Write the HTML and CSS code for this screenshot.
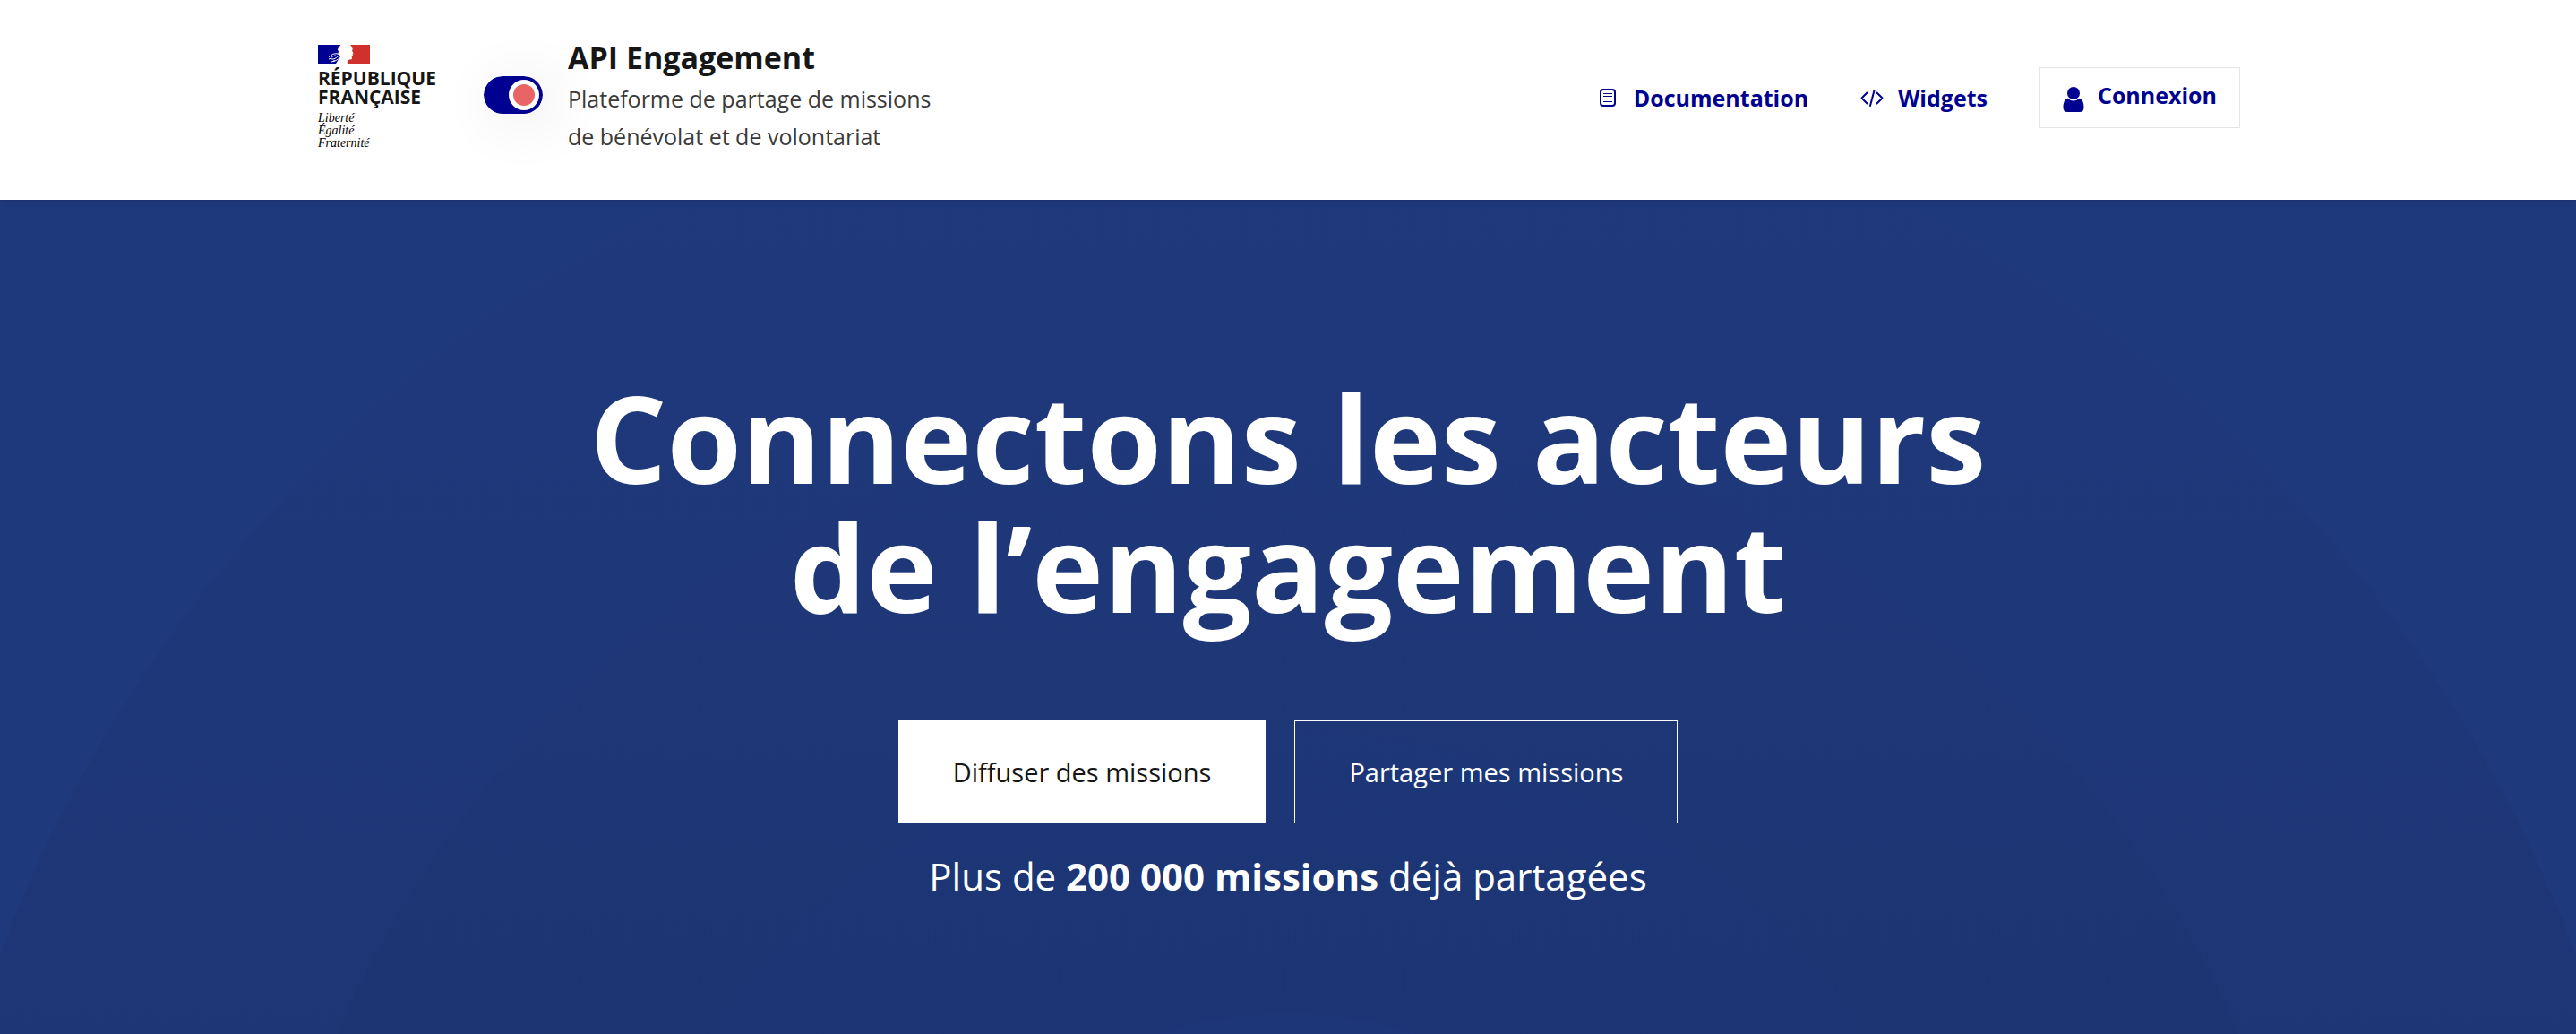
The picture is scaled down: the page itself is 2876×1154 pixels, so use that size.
FILE: index.html
```
<!DOCTYPE html>
<html lang="fr">
<head>
<meta charset="utf-8">
<meta name="viewport" content="width=device-width, initial-scale=1">
<title>API Engagement</title>
<link rel="stylesheet" href="styles.css">
</head>
<body>
<header class="header">
  <div class="header-inner">
    <div class="brand">
      <div class="marianne">
        <svg class="flag" viewBox="0 0 58 21" aria-hidden="true">
          <path fill="#000091" d="M0 0h25.500C24 1.500 22.500 3 22 5.500l1 2-1 3 3 2.500L20 21H0z"/>
          <path fill="#d0312d" d="M36 0h22v21H33c-1-2 0-3.500 2-4.500 2 0 3-.3 3-1.500l-.3-2 1.300-1-.5-1.200 1-1.300-1.500-3 .8-1.500C38 3 37.500 1.500 36 0z"/>
          <path fill="none" stroke="#fff" stroke-width="1" d="M22 10c-3-.5-5 0-7 1.500l-3 2M20 12c-3 0-4 1.500-6 2.500M23 12.500c-2 1-3 3-6 3.500l-4-.5M12 16l3-1M24 15c-2 1-4 3.500-7 3M15 19l4-1"/>
        </svg>
        <p class="republic">RÉPUBLIQUE<br>FRANÇAISE</p>
        <p class="motto">Liberté<br>Égalité<br>Fraternité</p>
      </div>
      <svg class="toggle" viewBox="0 0 66 42" aria-hidden="true">
        <rect width="66" height="42" rx="21" fill="#000091"/>
        <circle cx="45" cy="21" r="17" fill="#fff"/>
        <circle cx="45" cy="21" r="12" fill="#e96464"/>
      </svg>
      <div class="service">
        <p class="service-title">API Engagement</p>
        <p class="service-tagline">Plateforme de partage de missions<br>de bénévolat et de volontariat</p>
      </div>
    </div>
    <nav class="nav">
      <a class="nav-link" href="#documentation">
        <svg class="nav-icon" viewBox="0 0 26 26" fill="none" stroke="currentColor" aria-hidden="true">
          <rect x="5" y="4" width="16" height="18" rx="3" stroke-width="2"/>
          <path stroke-width="1" d="M8 8.500h10M8 11.500h10M8 14.500h10M8 17.500h10"/>
        </svg>
        Documentation
      </a>
      <a class="nav-link" href="#widgets">
        <svg class="nav-icon" viewBox="0 0 26 26" fill="none" stroke="currentColor" stroke-width="2" stroke-linecap="round" stroke-linejoin="round" aria-hidden="true">
          <path d="M7.500 7.500L1.500 13.500l6 6M18.500 7.500l6 6-6 6M15.500 5l-4.500 17"/>
        </svg>
        Widgets
      </a>
      <a class="login" href="#connexion">
        <svg class="login-icon" viewBox="0 0 24 28" fill="currentColor" aria-hidden="true">
          <circle cx="12" cy="7" r="7"/>
          <path d="M5.500 12.800a9 9 0 0 0 13 0C22 13.500 23.500 18 23.500 23c0 3-1.500 5-4.500 5H5c-3 0-4.500-2-4.500-5 0-5 1.500-9.500 5-10.200z"/>
        </svg>
        <span class="login-label">Connexion</span>
      </a>
    </nav>
  </div>
</header>
<main class="hero">
  <svg class="hero-waves" aria-hidden="true">
    <defs>
      <linearGradient id="shade" gradientUnits="userSpaceOnUse" x1="0" y1="0" x2="0" y2="931">
        <stop offset="0" stop-color="#1a2f63" stop-opacity="0.02"/>
        <stop offset="1" stop-color="#1a2f63" stop-opacity="0.3"/>
      </linearGradient>
      <linearGradient id="shade-inner" gradientUnits="userSpaceOnUse" x1="0" y1="229" x2="0" y2="931">
        <stop offset="0" stop-color="#1a2f63" stop-opacity="0"/>
        <stop offset="1" stop-color="#1a2f63" stop-opacity="0.2"/>
      </linearGradient>
    </defs>
    <circle cx="50%" cy="1382" r="1536" fill="url(#shade)"/>
    <circle cx="50%" cy="1382" r="1153" fill="url(#shade-inner)"/>
    <circle cx="50%" cy="1382" r="790" fill="#203d86" fill-opacity="0.1"/>
    <circle cx="50%" cy="1382" r="474" fill="#203d86" fill-opacity="0.2"/>
  </svg>
  <h1 class="hero-title">Connectons les acteurs<br>de l’engagement</h1>
  <div class="actions">
    <button class="button button-solid" type="button">Diffuser des missions</button>
    <button class="button button-outline" type="button">Partager mes missions</button>
  </div>
  <p class="hero-note">Plus de <strong>200 000 missions</strong> déjà partagées</p>
</main>
</body>
</html>
```
FILE: styles.css
```
* {
  box-sizing: border-box;
}

body {
  margin: 0;
  min-height: 100vh;
  display: flex;
  flex-direction: column;
  background: #fff;
  color: #161616;
  font-family: "Open Sans", "Noto Sans", sans-serif;
}

p,
h1 {
  margin: 0;
}

/* Header */
.header {
  position: relative;
  z-index: 1;
  padding: 39px 24px 50px;
  background: #fff;
  box-shadow: 0 2px 6px rgba(0, 0, 18, 0.16);
}

.header-inner {
  display: flex;
  align-items: center;
  justify-content: space-between;
  gap: 40px;
  max-width: 2166px;
  margin: 0 auto;
  padding-right: 20px;
}

.brand {
  display: flex;
  align-items: center;
}

.marianne {
  width: 185px;
  padding-top: 4px;
}

.flag {
  display: block;
  width: 58px;
  height: 21px;
}

.republic {
  padding-top: 6px;
  font-size: 21px;
  line-height: 21px;
  font-weight: 700;
}

.motto {
  padding-top: 6px;
  font-family: "Liberation Serif", serif;
  font-size: 14px;
  line-height: 14px;
  font-style: italic;
  color: #000;
}

.toggle {
  width: 66px;
  height: 42px;
  margin-right: 28px;
  border-radius: 21px;
  box-shadow: 12px 8px 60px 12px rgba(0, 0, 0, 0.05);
}

.service-title {
  font-size: 34px;
  line-height: 50px;
  font-weight: 700;
}

.service-tagline {
  font-size: 25px;
  line-height: 42px;
  color: #3a3a3a;
}

.nav {
  display: flex;
  align-items: center;
  gap: 58px;
  padding-top: 6px;
  color: #000091;
  font-size: 25px;
  line-height: 36px;
  font-weight: 700;
}

.nav-link,
.login {
  display: flex;
  align-items: center;
  color: inherit;
  text-decoration: none;
}

.nav-link {
  gap: 16px;
}

.nav-icon {
  width: 26px;
  height: 26px;
}

.login {
  gap: 15px;
  padding: 12px 25px;
  border: 1px solid #e5e5e5;
}

.login-icon {
  width: 24px;
  height: 28px;
  margin-top: 4px;
}

.login-label {
  padding-bottom: 6px;
}

/* Hero */
.hero {
  position: relative;
  flex: 1;
  display: flex;
  flex-direction: column;
  align-items: center;
  padding: 193px 24px 120px;
  color: #fff;
  text-align: center;
  background: #1f397d;
  isolation: isolate;
}

.hero-waves {
  position: absolute;
  inset: 0;
  z-index: -1;
  width: 100%;
  height: 100%;
}

.hero-title {
  font-size: 135px;
  line-height: 144px;
  font-weight: 700;
}

.actions {
  display: flex;
  flex-wrap: wrap;
  justify-content: center;
  gap: 32px;
  margin-top: 100px;
}

.button {
  padding: 35px 60px;
  border: 1px solid #fff;
  border-radius: 0;
  font-family: inherit;
  font-size: 29px;
  line-height: 43px;
  cursor: pointer;
}

.button-solid {
  background: #fff;
  color: #161616;
}

.button-outline {
  background: transparent;
  color: #fff;
}

.hero-note {
  margin-top: 29px;
  font-size: 42px;
  line-height: 60px;
}

.hero-note strong {
  font-weight: 700;
}
```
